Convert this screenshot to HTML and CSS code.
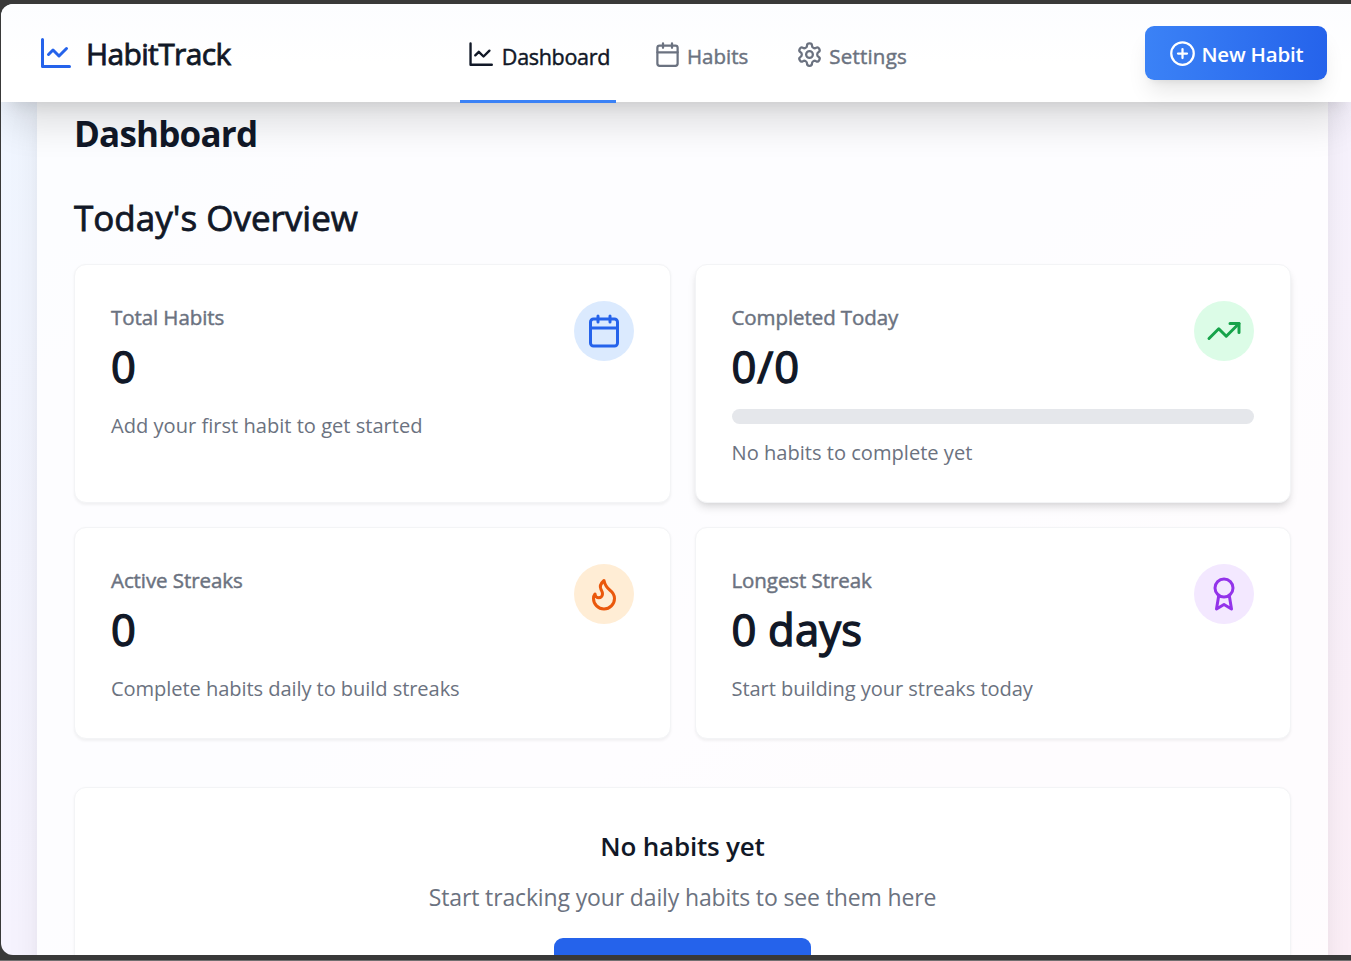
FILE: index.html
```html
<!DOCTYPE html>
<html lang="en">
<head>
<meta charset="utf-8">
<title>HabitTrack</title>
<link rel="stylesheet" href="styles.css">
</head>
<body>
<div class="window">
  <header class="header">
    <div class="brand">
      <svg class="icon icon-lg" viewBox="0 0 24 24"><path d="M3 3v18h18"/><path d="m19 9-5 5-4-4-3 3"/></svg>
      <span class="brand-name">HabitTrack</span>
    </div>
    <nav class="nav">
      <a class="nav-item active"><svg class="icon" viewBox="0 0 24 24"><path d="M3 3v18h18"/><path d="m19 9-5 5-4-4-3 3"/></svg><span>Dashboard</span></a>
      <a class="nav-item habits"><svg class="icon" viewBox="0 0 24 24"><path d="M8 2v4M16 2v4M3 10h18"/><rect x="3" y="4" width="18" height="18" rx="2"/></svg><span>Habits</span></a>
      <a class="nav-item settings"><svg class="icon" viewBox="0 0 24 24"><path d="M12.22 2h-.44a2 2 0 0 0-2 2v.18a2 2 0 0 1-1 1.73l-.43.25a2 2 0 0 1-2 0l-.15-.08a2 2 0 0 0-2.73.73l-.22.38a2 2 0 0 0 .73 2.73l.15.1a2 2 0 0 1 1 1.72v.51a2 2 0 0 1-1 1.74l-.15.09a2 2 0 0 0-.73 2.73l.22.38a2 2 0 0 0 2.73.73l.15-.08a2 2 0 0 1 2 0l.43.25a2 2 0 0 1 1 1.73V20a2 2 0 0 0 2 2h.44a2 2 0 0 0 2-2v-.18a2 2 0 0 1 1-1.73l.43-.25a2 2 0 0 1 2 0l.15.08a2 2 0 0 0 2.73-.73l.22-.39a2 2 0 0 0-.73-2.73l-.15-.08a2 2 0 0 1-1-1.74v-.5a2 2 0 0 1 1-1.74l.15-.09a2 2 0 0 0 .73-2.73l-.22-.38a2 2 0 0 0-2.73-.73l-.15.08a2 2 0 0 1-2 0l-.43-.25a2 2 0 0 1-1-1.73V4a2 2 0 0 0-2-2z"/><circle cx="12" cy="12" r="3"/></svg><span>Settings</span></a>
    </nav>
    <button class="new-habit"><svg class="icon" viewBox="0 0 24 24"><circle cx="12" cy="12" r="10"/><path d="M8 12h8M12 8v8"/></svg><span>New Habit</span></button>
  </header>
  <main class="panel">
    <h1 class="page-title">Dashboard</h1>
    <h2 class="section-title">Today's Overview</h2>
    <section class="cards">
      <article class="card">
        <p class="label">Total Habits</p>
        <p class="value">0</p>
        <p class="note">Add your first habit to get started</p>
        <div class="badge blue"><svg class="icon icon-lg" viewBox="0 0 24 24"><path d="M8 2v4M16 2v4M3 10h18"/><rect x="3" y="4" width="18" height="18" rx="2"/></svg></div>
      </article>
      <article class="card raised">
        <p class="label">Completed Today</p>
        <p class="value ratio">0/0</p>
        <div class="progress"></div>
        <p class="note">No habits to complete yet</p>
        <div class="badge green"><svg class="icon icon-lg" viewBox="0 0 24 24"><path d="m22 7-8.500 8.500-5-5L2 17"/><path d="M16 7h6v6"/></svg></div>
      </article>
      <article class="card">
        <p class="label">Active Streaks</p>
        <p class="value">0</p>
        <p class="note tight">Complete habits daily to build streaks</p>
        <div class="badge orange"><svg class="icon icon-lg" viewBox="0 0 24 24"><path d="M8.500 14.500A2.500 2.500 0 0 0 11 12c0-1.380-.5-2-1-3-1.072-2.143-.224-4.054 2-6 .5 2.500 2 4.900 4 6.500 2 1.600 3 3.500 3 5.500a7 7 0 1 1-14 0c0-1.153.433-2.294 1-3a2.500 2.500 0 0 0 2.500 2.500z"/></svg></div>
      </article>
      <article class="card">
        <p class="label">Longest Streak</p>
        <p class="value">0 days</p>
        <p class="note tight">Start building your streaks today</p>
        <div class="badge purple"><svg class="icon icon-lg" viewBox="0 0 24 24"><circle cx="12" cy="8" r="6"/><path d="M15.477 12.890 17 22l-5-3-5 3 1.523-9.110"/></svg></div>
      </article>
    </section>
    <section class="empty">
      <h3 class="empty-title">No habits yet</h3>
      <p class="empty-note">Start tracking your daily habits to see them here</p>
      <button class="empty-action" aria-label="Add habit"></button>
    </section>
  </main>
</div>
</body>
</html>
```
FILE: styles.css
```css
* { box-sizing: border-box; margin: 0; padding: 0; }
body {
  height: 961px;
  overflow: hidden;
  padding: 4px 0 5px 1px;
  background: #393939;
  border-bottom: 1px solid #716f70;
  font-family: "Open Sans", "Noto Sans", sans-serif;
  color: #111827;
}
.window {
  height: 951px;
  overflow: hidden;
  border-radius: 12px 0 0 12px;
  background: linear-gradient(to bottom right, #eff6ff, #f6f3fe 50%, #fceff7);
}
.icon { width: 27px; height: 27px; fill: none; stroke: currentColor; stroke-width: 2; stroke-linecap: round; stroke-linejoin: round; flex: none; }
.icon-lg { width: 36px; height: 36px; }
span { white-space: nowrap; }

/* Medium weight: the regular cut with a thin outline */
.brand-name, .section-title { -webkit-text-stroke: 0.8px currentColor; }
.value { -webkit-text-stroke: 1.4px currentColor; }
.nav, .label { -webkit-text-stroke: 0.45px currentColor; }

.header {
  position: relative;
  z-index: 2;
  height: 98px;
  display: grid;
  grid-template-columns: 459px 1fr 182px;
  align-items: center;
  padding-right: 24px;
  background: linear-gradient(to bottom, #fcfdff, #fff 60%);
  box-shadow: 0 30px 37.5px -7.5px rgba(0,0,0,.12), 0 12px 15px -9px rgba(0,0,0,.1);
}
.brand { display: flex; align-items: center; gap: 12px; padding-left: 37px; color: #2563eb; }
.brand-name { color: #111827; font-size: 30px; line-height: 42px; letter-spacing: -0.65px; margin-top: 2px; }
.nav { display: flex; height: 98px; align-items: center; color: #6b7280; font-size: 20.5px; }
.nav-item { display: flex; align-items: center; gap: 6px; height: 100%; padding-top: 6px; }
.nav-item .icon { margin-top: -4px; }
.nav-item.active { width: 156px; height: 99px; padding: 8px 0 0 6.5px; border-bottom: 3px solid #3b82f6; align-self: flex-start; color: #111827; font-size: 21.5px; letter-spacing: -0.3px; gap: 7px; }
.nav-item.active .icon { width: 28.35px; height: 28.35px; }
.nav-item.habits { margin-left: 38px; }
.nav-item.settings { margin-left: 48px; letter-spacing: 0.2px; }
.new-habit {
  display: flex; align-items: center; justify-content: center; gap: 6px;
  height: 54px; border: 0; border-radius: 9px; color: #fff;
  font: 600 20.5px "Open Sans", sans-serif;
  letter-spacing: -0.2px;
  background: linear-gradient(to right, #3b82f6, #2563eb);
  box-shadow: 0 15px 22.5px -4.5px rgba(0,0,0,.1), 0 6px 9px -6px rgba(0,0,0,.1);
}
.new-habit span { margin-top: 2px; }

.panel {
  margin-left: 36px;
  width: 1291px;
  height: 900px;
  padding: 8px 37px 0;
  background: rgba(255,255,255,.8);
  box-shadow: 0 0 37.5px -7.5px rgba(0,0,0,.1), 0 0 15px -9px rgba(0,0,0,.1);
}
.page-title { font-size: 35px; font-weight: 700; line-height: 48px; letter-spacing: -0.8px; }
.section-title { margin-top: 36px; font-size: 35px; font-weight: 400; line-height: 48px; }
.cards { margin-top: 22px; display: grid; grid-template-columns: 1fr 1fr; grid-template-rows: 238.5px 212px; gap: 24px; }
.card, .empty { background: #fff; border: 1.5px solid #f3f4f6; border-radius: 12px; box-shadow: 0 1.5px 3px rgba(0,0,0,.05); }
.card { position: relative; padding: 37px 36px 34px; }
.raised { box-shadow: 0 6px 9px -1.5px rgba(0,0,0,.1), 0 3px 6px -3px rgba(0,0,0,.1); }
.label { color: #6b7280; font-size: 20.5px; line-height: 30px; letter-spacing: -0.08px; }
.value { margin-top: 8px; font-size: 43.5px; line-height: 54px; letter-spacing: 0.2px; }
.ratio { letter-spacing: 1px; }
.note { margin-top: 17px; color: #6b7280; font-size: 20.1px; line-height: 30px; }
.tight { letter-spacing: -0.08px; }
.progress { height: 15px; margin-top: 15px; border-radius: 8px; background: #e5e7eb; }
.progress + .note { margin-top: 14px; }
.badge { position: absolute; top: 36px; right: 36px; width: 60px; height: 60px; border-radius: 50%; display: grid; place-items: center; }
.blue { background: #dbeafe; color: #2563eb; }
.green { background: #dcfce7; color: #16a34a; }
.orange { background: #ffedd5; color: #ea580c; }
.purple { background: #f3e8ff; color: #9333ea; }
.empty { margin-top: 48px; height: 240px; padding-top: 37px; text-align: center; }
.empty-title { font-size: 26px; font-weight: 600; line-height: 42px; letter-spacing: -0.2px; }
.empty-note { margin-top: 12px; color: #6b7280; font-size: 23px; line-height: 36px; letter-spacing: -0.14px; }
.empty-action { margin-top: 23px; width: 257px; height: 54px; border: 0; border-radius: 9px; background: #2563eb; }
```
